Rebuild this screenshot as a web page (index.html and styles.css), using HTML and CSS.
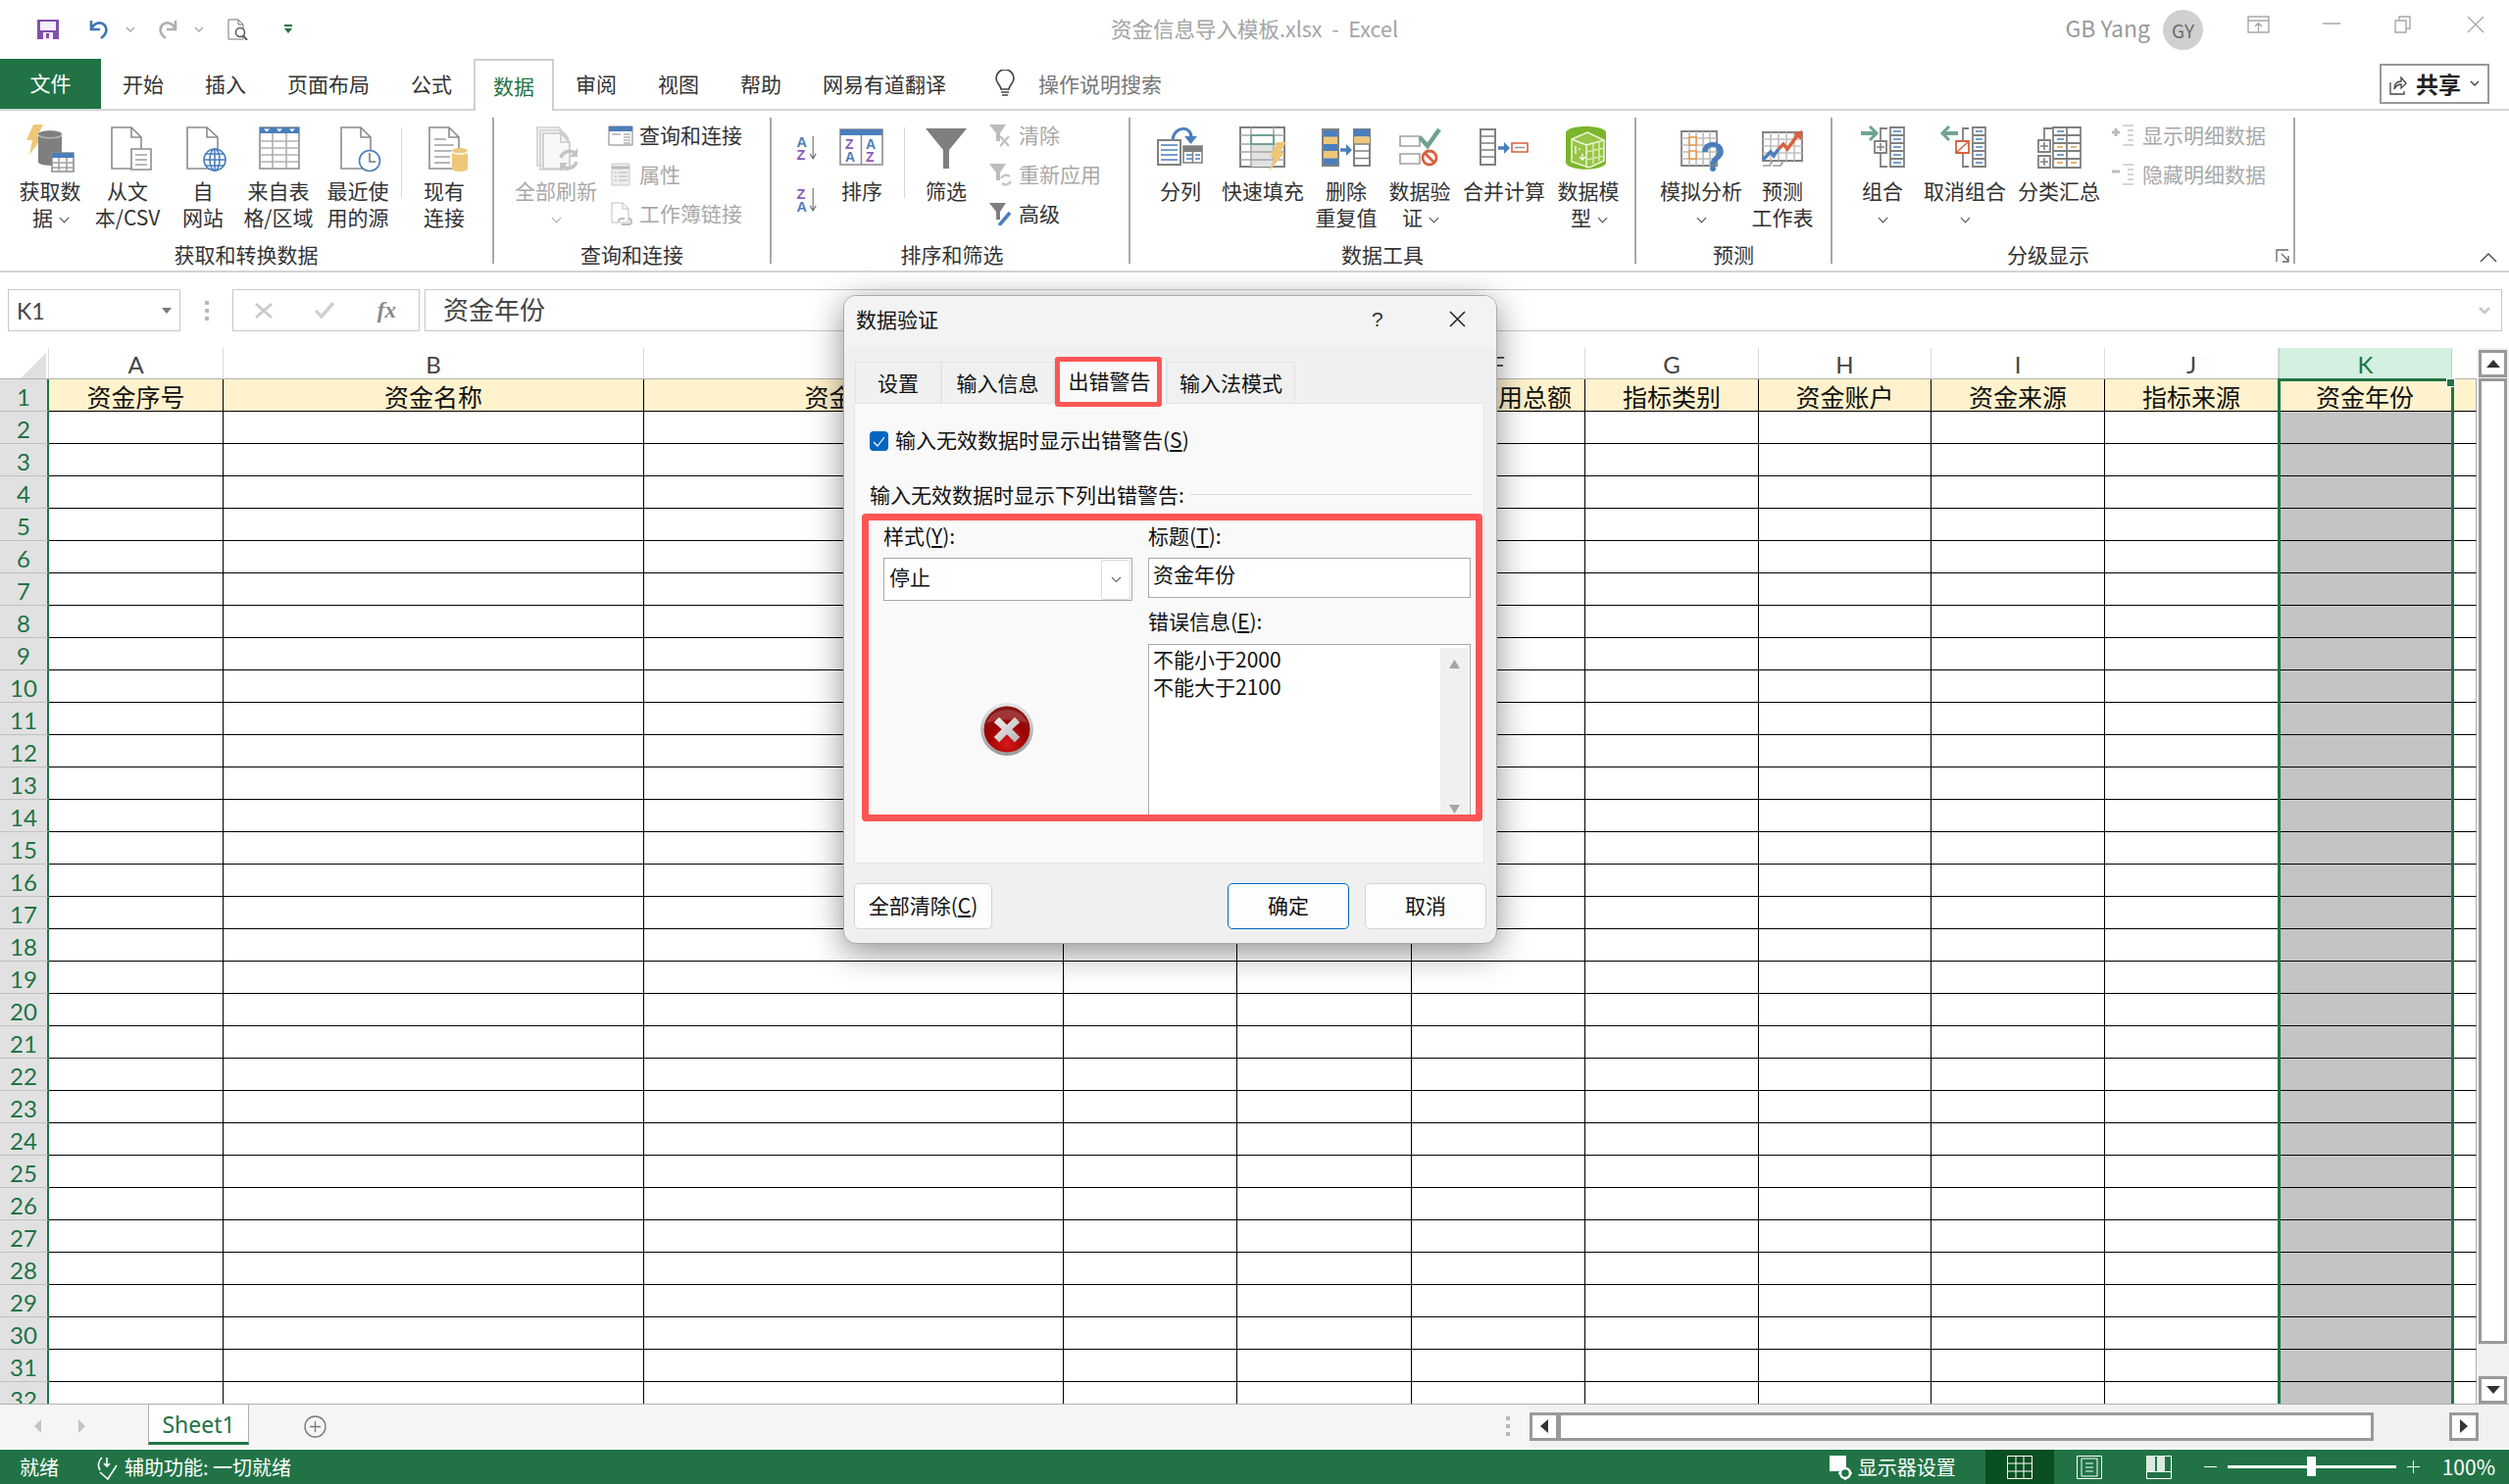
FILE: index.html
```html
<!DOCTYPE html>
<html lang="zh-CN">
<head>
<meta charset="utf-8">
<title>资金信息导入模板.xlsx - Excel</title>
<link rel="stylesheet" href="styles.css">
</head>
<body>
<header class="titlebar">
  <div class="qat">
    <svg class="qat-save" width="22" height="20" viewBox="0 0 22 20"><path d="M0 0h22v20H0z" fill="#8150ad"/><path d="M3 2h16v9H3z" fill="#f6f0fb"/><path d="M6 13h10v7H6z" fill="#f6f0fb"/><path d="M9 14h3v5H9z" fill="#8150ad"/></svg>
    <svg class="qat-undo" width="22" height="22" viewBox="0 0 22 22"><path d="M3 2v9h9M3 11c3-7 9-8 13-5 4 4 3 10-3 14" fill="none" stroke="#3f76b5" stroke-width="2.600"/></svg>
    <svg class="qat-chev" width="10" height="7" viewBox="0 0 10 7"><path d="M1 1l4 4 4-4" fill="none" stroke="#a8a8a8" stroke-width="1.500"/></svg>
    <svg class="qat-redo" width="22" height="22" viewBox="0 0 22 22"><path d="M19 2v9h-9M19 11c-3-7-9-8-13-5-4 4-3 10 3 14" fill="none" stroke="#b0b0b0" stroke-width="2.600"/></svg>
    <svg class="qat-chev" width="10" height="7" viewBox="0 0 10 7"><path d="M1 1l4 4 4-4" fill="none" stroke="#a8a8a8" stroke-width="1.500"/></svg>
    <svg class="qat-print" width="22" height="22" viewBox="0 0 22 22"><path d="M1 1h10l5 5v15H1zM11 1v5h5" fill="#fff" stroke="#777"/><circle cx="13" cy="14" r="4.500" fill="#fff" stroke="#555" stroke-width="1.500"/><path d="M16 17l4 5" stroke="#555" stroke-width="2"/></svg>
    <svg class="qat-more" width="8" height="10" viewBox="0 0 8 10"><path d="M0 0h8v2H0zM0 4h8L4 9z" fill="#217346"/></svg>
  </div>
  <div class="doc-title">资金信息导入模板.xlsx&nbsp; - &nbsp;Excel</div>
  <div class="winctl">
    <span class="user">GB Yang</span>
    <span class="avatar">GY</span>
    <svg class="wc-ribbon" width="23" height="18" viewBox="0 0 23 18"><path d="M1 1h21v16H1zM1 5h21M11.500 16V8M8 11l3.500-3.500L15 11" fill="none" stroke="#a8a8a8" stroke-width="1.400"/></svg>
    <svg class="wc-min" width="18" height="2" viewBox="0 0 18 2"><path d="M0 1h18" stroke="#a8a8a8" stroke-width="1.500"/></svg>
    <svg class="wc-max" width="18" height="18" viewBox="0 0 18 18"><path d="M1 5h11v12H1zM5 5V1h11v12h-4" fill="none" stroke="#a8a8a8" stroke-width="1.400"/></svg>
    <svg class="wc-close" width="18" height="18" viewBox="0 0 18 18"><path d="M1 1l16 16M17 1L1 17" stroke="#a8a8a8" stroke-width="1.400"/></svg>
  </div>
</header>

<nav class="tabs">
  <span class="tab tab-file">文件</span>
  <span class="tab">开始</span>
  <span class="tab">插入</span>
  <span class="tab">页面布局</span>
  <span class="tab">公式</span>
  <span class="tab tab-on">数据</span>
  <span class="tab">审阅</span>
  <span class="tab">视图</span>
  <span class="tab">帮助</span>
  <span class="tab">网易有道翻译</span>
  <span class="tellme">
    <svg width="20" height="29" viewBox="0 0 20 29"><path d="M6 20c0-4-5-6-5-11a9 9 0 0 1 18 0c0 5-5 7-5 11z M6 23h8M7 26h6" fill="none" stroke="#444" stroke-width="1.700"/></svg>
    <span>操作说明搜索</span>
  </span>
  <span class="share">
    <svg width="18" height="22" viewBox="0 0 18 22"><path d="M1 9v12h14v-3M5 16c0-6 3-8 7-8V4l5 6-5 5v-4c-3 0-5 1-7 5z" fill="none" stroke="#444" stroke-width="1.300"/></svg>
    <b>共享</b>
    <svg width="10" height="7" viewBox="0 0 10 7"><path d="M1 1l4 4 4-4" fill="none" stroke="#444" stroke-width="1.500"/></svg>
  </span>
</nav>

<section class="ribbon">
  <div class="group g1">
    <div class="group-body">
      <div class="btn w76">
        <svg class="ico" viewBox="0 0 60 50"><path d="M13 0h10l-6 12h6L9 31l3-15H6z" fill="#f0c674"/><path d="M18 10c0-5 24-5 24 0v28c0 5-24 5-24 0z" fill="#7f7f7f"/><path d="M18 10c0 5 24 5 24 0" fill="none" stroke="#b4b4b4" stroke-width="1.500"/><path d="M32 29h22v19H32z" fill="#fff" stroke="#8c8c8c"/><path d="M32 29h22v5H32z" fill="#4a7ebb"/><path d="M32 39h22M32 44h22M39 34v14M47 34v14" stroke="#a0a0a0"/></svg>
        <span>获取数<br>据<i class="chev"></i></span>
      </div>
      <div class="btn w82">
        <svg class="ico" viewBox="0 0 60 50"><path d="M14 3h20l10 10v32H14zM34 3v10h10" fill="#fff" stroke="#8c8c8c"/><path d="M34 25h20v21H34z" fill="#fff" stroke="#8c8c8c"/><path d="M38 31h12M38 36h12M38 41h12" stroke="#a0a0a0"/></svg>
        <span>从文<br>本/CSV</span>
      </div>
      <div class="btn w72">
        <svg class="ico" viewBox="0 0 60 50"><path d="M14 3h20l11 10v32H14zM34 3v10h11" fill="#fff" stroke="#8c8c8c"/><circle cx="42" cy="36" r="11" fill="#fff" stroke="#4a7ebb"/><ellipse cx="42" cy="36" rx="5" ry="11" fill="none" stroke="#4a7ebb"/><path d="M31 36h22M33 30h18M33 42h18M42 25v22" stroke="#4a7ebb"/></svg>
        <span>自<br>网站</span>
      </div>
      <div class="btn w82">
        <svg class="ico" viewBox="0 0 60 50"><path d="M11 3h40v42H11z" fill="#fff" stroke="#8c8c8c"/><path d="M11 3h40v6H11z" fill="#4a7ebb"/><path d="M15 4.500h6l-3 3zM28 4.500h6l-3 3zM41 4.500h6l-3 3z" fill="#fff"/><path d="M11 17h40M11 24h40M11 31h40M11 38h40M24 9v36M38 9v36" stroke="#b0b0b0"/></svg>
        <span>来自表<br>格/区域</span>
      </div>
      <div class="btn w80">
        <svg class="ico" viewBox="0 0 60 50"><path d="M13 3h20l10 10v32H13zM33 3v10h10" fill="#fff" stroke="#8c8c8c"/><circle cx="42" cy="37" r="10.500" fill="#fff" stroke="#4a7ebb"/><path d="M42 29v9h6" fill="none" stroke="#777"/></svg>
        <span>最近使<br>用的源</span>
      </div>
      <i class="vsep"></i>
      <div class="btn w78">
        <svg class="ico" viewBox="0 0 60 50"><path d="M15 3h20l10 10v32H15zM35 3v10h10" fill="#fff" stroke="#8c8c8c"/><path d="M20 15h12M20 21h20M20 27h20M20 33h16M20 39h16" stroke="#a0a0a0"/><path d="M38 27c0-4 16-4 16 0v18c0 4-16 4-16 0z" fill="#eec77b"/><path d="M38 27c0 4 16 4 16 0" fill="none" stroke="#fff"/></svg>
        <span>现有<br>连接</span>
      </div>
    </div>
    <div class="group-label">获取和转换数据</div>
  </div>

  <div class="group g2">
    <div class="group-body">
      <div class="btn w90 off">
        <svg class="ico" viewBox="0 0 60 50"><path d="M11 3h22l9 10v29H11z" fill="#f4f4f4" stroke="#d0d0d0"/><path d="M14 6h19l9 8v32H14z" fill="#f4f4f4" stroke="#d0d0d0"/><path d="M17 9h18l9 9v27H17zM35 9v9h9" fill="#f8f8f8" stroke="#c8c8c8"/><path d="M35 34a9 9 0 0 1 15-4M51 38a9 9 0 0 1-15 4" fill="none" stroke="#c4c4c4" stroke-width="3.500"/><path d="M52 24v9h-8zM34 48v-9h8z" fill="#c4c4c4"/></svg>
        <span>全部刷新<br><i class="chev chev-solo"></i></span>
      </div>
      <div class="smalls">
        <div class="small on"><svg viewBox="0 0 26 24"><path d="M1 3h24v19H1z" fill="#fff" stroke="#7f7f7f"/><path d="M1 3h24v5H1z" fill="#4a7ebb"/><path d="M16 11h7M16 14h7M16 17h7M16 20h7M4 11h9" stroke="#8c8c8c"/></svg><span>查询和连接</span></div>
        <div class="small"><svg viewBox="0 0 26 24"><path d="M4 1h18v22H4z" fill="#ededed" stroke="#c8c8c8"/><path d="M4 5h18" stroke="#bcbcbc" stroke-width="3"/><path d="M7 10h2M11 10h9M7 14h2M11 14h9M7 18h2M11 18h9" stroke="#b4b4b4"/></svg><span>属性</span></div>
        <div class="small"><svg viewBox="0 0 26 24"><path d="M4 1h11l6 6v14H4zM15 1v6h6" fill="#fff" stroke="#c0c0c0"/><path d="M11 20a3 3 0 0 1 3-3h3M21 17a3 3 0 0 1 0 6h-7" fill="none" stroke="#bcbcbc" stroke-width="2"/></svg><span>工作簿链接</span></div>
      </div>
    </div>
    <div class="group-label">查询和连接</div>
  </div>

  <div class="group g3">
    <div class="group-body">
      <div class="sortpair">
        <div class="sortmini"><svg viewBox="0 0 22 26"><text class="s-a" x="0" y="12">A</text><text class="s-z" x="0" y="24">Z</text><path d="M16 1v21M13 18l3 5 3-5" fill="none" stroke="#666"/></svg></div>
        <div class="sortmini"><svg viewBox="0 0 22 26"><text class="s-z" x="0" y="12">Z</text><text class="s-a" x="0" y="24">A</text><path d="M16 1v21M13 18l3 5 3-5" fill="none" stroke="#666"/></svg></div>
      </div>
      <div class="btn w60">
        <svg class="ico" viewBox="0 0 60 50"><path d="M8 5h43v36H8z" fill="#fff" stroke="#8c8c8c"/><path d="M8 5h43v6H8z" fill="#4a7ebb"/><path d="M29.500 11v30" stroke="#8c8c8c"/><text class="s-z" x="13" y="25">Z</text><text class="s-a" x="34" y="25">A</text><text class="s-a" x="13" y="38">A</text><text class="s-z" x="34" y="38">Z</text></svg>
        <span>排序</span>
      </div>
      <i class="vsep vsep2"></i>
      <div class="btn w60">
        <svg class="ico" viewBox="0 0 60 50"><path d="M9 4h42L33 26v19h-6V26z" fill="#7f7f7f"/></svg>
        <span>筛选</span>
      </div>
      <div class="smalls s3">
        <div class="small"><svg viewBox="0 0 26 24"><path d="M2 1h17l-6 9v8h-4v-8z" fill="#bcbcbc"/><path d="M13 13l9 10M22 13l-9 10" stroke="#c0c0c0" stroke-width="2"/></svg><span>清除</span></div>
        <div class="small"><svg viewBox="0 0 26 24"><path d="M2 1h17l-6 9v8h-4v-8z" fill="#bcbcbc"/><path d="M14 16a6 6 0 0 1 9-2M24 19a6 6 0 0 1-9 2" fill="none" stroke="#c4c4c4" stroke-width="2.500"/></svg><span>重新应用</span></div>
        <div class="small on"><svg viewBox="0 0 26 24"><path d="M2 1h17l-6 9v8h-4v-8z" fill="#7f7f7f"/><path d="M23 11L12 24" stroke="#4a7ebb" stroke-width="3.500"/></svg><span>高级</span></div>
      </div>
    </div>
    <div class="group-label">排序和筛选</div>
  </div>

  <div class="group g4">
    <div class="group-body">
      <div class="btn w76">
        <svg class="ico" viewBox="0 0 60 50"><path d="M7 16h23v25H7z" fill="#fff" stroke="#808080" stroke-width="2"/><path d="M10 21h17M10 26h17M10 31h17M10 36h17" stroke="#4a7ebb" stroke-width="1.500"/><path d="M33 22h19v17H33z" fill="#fff" stroke="#808080"/><path d="M33 22h19v6H33z" fill="#7f7f7f"/><path d="M36 31h6M45 31h5M36 35h6M45 35h5" stroke="#4a7ebb"/><path d="M42.500 28v11" stroke="#808080"/><path d="M22 15c2-14 20-14 19-1" fill="none" stroke="#4a7ebb" stroke-width="3"/><path d="M34 12h13l-6.500 8z" fill="#4a7ebb"/></svg>
        <span>分列</span>
      </div>
      <div class="btn w92">
        <svg class="ico" viewBox="0 0 60 50"><path d="M7 3h45v40H7z" fill="#fff" stroke="#808080" stroke-width="2"/><path d="M18 20h23v23H18z" fill="#e2e2e2"/><path d="M7 11h45M7 20h45M7 28h45M7 36h45M18 3v40M41 3v40" stroke="#a8a8a8"/><path d="M18 11h23v9H18z" fill="#fff" stroke="#6fa38f" stroke-width="2"/><path d="M45 18h9l-7 11h5L36 48l6-15h-5z" fill="#f0c674"/></svg>
        <span>快速填充</span>
      </div>
      <div class="btn w78">
        <svg class="ico" viewBox="0 0 60 50"><path d="M6 5h16v37H6z" fill="#4a7ebb"/><path d="M6 12.500h16v7.500H6zM6 27h16v7.500H6z" fill="#eec77b"/><path d="M6 5h16v37H6z" fill="none" stroke="#808080" stroke-width="2"/><path d="M38 5h16v37H38z" fill="#fff" stroke="#808080" stroke-width="2"/><path d="M38 5h16v7.500H38z" fill="#4a7ebb"/><path d="M38 12.500h16V20H38z" fill="#eec77b"/><path d="M38 20h16M38 27h16M38 34.500h16" stroke="#808080" stroke-width="1.500"/><path d="M24 26h8" stroke="#4a7ebb" stroke-width="3.500"/><path d="M30 20l6 6-6 6z" fill="#4a7ebb"/></svg>
        <span>删除<br>重复值</span>
      </div>
      <div class="btn w72">
        <svg class="ico" viewBox="0 0 60 50"><path d="M10 12h20v10H10zM10 30h20v10H10z" fill="#fff" stroke="#a0a0a0"/><path d="M30 13l8 9L50 5" fill="none" stroke="#6fa38f" stroke-width="4.500"/><circle cx="40" cy="34" r="7" fill="#fff" stroke="#d9603f" stroke-width="2.800"/><path d="M35 29l10 10" stroke="#d9603f" stroke-width="2.800"/></svg>
        <span>数据验<br>证<i class="chev"></i></span>
      </div>
      <div class="btn w100">
        <svg class="ico" viewBox="0 0 60 50"><path d="M6 5h15v36H6z" fill="#fff" stroke="#808080" stroke-width="2"/><path d="M6 12h15M6 19h15M6 26h15M6 33h15" stroke="#808080" stroke-width="1.500"/><path d="M24 24h8" stroke="#4a7ebb" stroke-width="3.500"/><path d="M30 18l6 6-6 6z" fill="#4a7ebb"/><path d="M38 19h16v9H38z" fill="#fff" stroke="#d9603f"/><path d="M41 23.500h10" stroke="#999"/></svg>
        <span>合并计算</span>
      </div>
      <div class="btn w72">
        <svg class="ico" viewBox="0 0 60 50"><path d="M7 8c2-8 39-8 41 0v31c-2 9-39 9-41 0z" fill="#7ab52b"/><path d="M13 15l16-7 17 8v21l-15 7-18-6z" fill="#96c547" stroke="#eef6dc" stroke-width="1.500"/><path d="M13 15l15 6 18-5M28 21v23" fill="none" stroke="#eef6dc" stroke-width="1.500"/><path d="M35 19v21M41 17v20M28 28l18-4M28 36l18-4" stroke="#d6ebae"/><path d="M17 22v8M21 26v-2M24 30v6M21 33l3 3 3-3" fill="none" stroke="#fff" stroke-width="1.300"/></svg>
        <span>数据模<br>型<i class="chev"></i></span>
      </div>
    </div>
    <div class="group-label">数据工具</div>
  </div>

  <div class="group g5">
    <div class="group-body">
      <div class="btn w92">
        <svg class="ico" viewBox="0 0 60 50"><path d="M10 7h36v35H10z" fill="#fff" stroke="#808080" stroke-width="1.800"/><path d="M10 14h36M10 21h36M10 28h36M10 35h36M18 7v35M25 7v35M32 7v35M39 7v35" stroke="#bcbcbc"/><path d="M18 13h7v8h-7zM18 27h7v8h-7z" fill="#fff" stroke="#e89540" stroke-width="1.500"/><path d="M34 28c0-10 16-10 16 0 0 6-8 6-8 13" fill="none" stroke="#4a7ebb" stroke-width="5.500"/><circle cx="42" cy="45" r="3" fill="#4a7ebb"/></svg>
        <span>模拟分析<br><i class="chev chev-solo"></i></span>
      </div>
      <div class="btn w74">
        <svg class="ico" viewBox="0 0 60 50"><path d="M10 8h40v29H10z" fill="#fff" stroke="#808080" stroke-width="1.800"/><path d="M10 15h40M10 22h40M10 29h40M18 8v29M26 8v29M34 8v29M42 8v29" stroke="#c0c0c0"/><path d="M10 36l8-8 3 4 5-7" fill="none" stroke="#4a7ebb" stroke-width="3.500"/><path d="M26 25l5-5 4 5 11-15" fill="none" stroke="#d9603f" stroke-width="3.500"/><path d="M41 9l9-3-1 10z" fill="#d9603f"/><path d="M10 42h7l3-5M20 42h8l3-5" fill="none" stroke="#999"/></svg>
        <span>预测<br>工作表</span>
      </div>
    </div>
    <div class="group-label">预测</div>
  </div>

  <div class="group g6">
    <div class="group-body">
      <div class="btn w78">
        <svg class="ico" viewBox="0 0 60 50"><path d="M8 9h15" stroke="#6fa38f" stroke-width="4"/><path d="M17 2l7 7-7 7" fill="none" stroke="#6fa38f" stroke-width="3"/><path d="M35 4h-7v12M35 43h-7V30" fill="none" stroke="#808080" stroke-width="1.800"/><path d="M22 17h12v12H22z" fill="#fff" stroke="#808080" stroke-width="1.800"/><path d="M24 23h8M28 19v8" stroke="#808080"/><path d="M38 3h14v40H38zM38 11h14M38 19h14M38 27h14M38 35h14" fill="#fff" stroke="#808080" stroke-width="1.800"/><path d="M41 7h8M41 15h8M41 23h8M41 31h8M41 39h8" stroke="#4a7ebb" stroke-width="1.500"/></svg>
        <span>组合<br><i class="chev chev-solo"></i></span>
      </div>
      <div class="btn w90">
        <svg class="ico" viewBox="0 0 60 50"><path d="M9 9h14" stroke="#6fa38f" stroke-width="4"/><path d="M14 2L7 9l7 7" fill="none" stroke="#6fa38f" stroke-width="3"/><path d="M34 4h-6v13M34 43h-6V29" fill="none" stroke="#808080" stroke-width="1.800"/><path d="M21 17h13v12H21z" fill="#fff" stroke="#d9603f" stroke-width="1.800"/><path d="M22 28l11-10" stroke="#d9603f"/><path d="M38 3h13v40H38zM38 11h13M38 19h13M38 27h13M38 35h13" fill="#fff" stroke="#808080" stroke-width="1.800"/><path d="M41 7h7M41 15h7M41 23h7M41 31h7M41 39h7" stroke="#4a7ebb" stroke-width="1.500"/></svg>
        <span>取消组合<br><i class="chev chev-solo"></i></span>
      </div>
      <div class="btn w102">
        <svg class="ico" viewBox="0 0 60 50"><path d="M23 4h-8v12" fill="none" stroke="#808080" stroke-width="1.800"/><path d="M9 16h12v12H9zM9 32h12v12H9z" fill="#fff" stroke="#808080" stroke-width="1.800"/><path d="M11 22h8M15 18v8M11 38h8M15 34v8" stroke="#808080"/><path d="M24 3h28v41H24zM24 11h28M24 19h28M24 27h28M24 35h28M38 3v41" fill="#fff" stroke="#808080" stroke-width="1.800"/><path d="M28 7h7M28 15h7M28 31h7" stroke="#4a7ebb" stroke-width="1.500"/><path d="M28 23h6M42 23h6M28 39h6M42 39h6" stroke="#e89540" stroke-width="1.500"/></svg>
        <span>分类汇总</span>
      </div>
      <div class="smalls s6">
        <div class="small"><svg viewBox="0 0 26 24"><path d="M1 9h8M5 5v8" stroke="#bcbcbc" stroke-width="3"/><path d="M12 2h11M17 7h6M17 12h6M17 17h6M12 22h11" stroke="#c8c8c8" stroke-width="1.500"/></svg><span>显示明细数据</span></div>
        <div class="small"><svg viewBox="0 0 26 24"><path d="M1 9h8" stroke="#bcbcbc" stroke-width="3"/><path d="M12 2h11M17 7h6M17 12h6M17 17h6M12 22h11" stroke="#c8c8c8" stroke-width="1.500"/></svg><span>隐藏明细数据</span></div>
      </div>
      <svg class="launcher" width="14" height="14" viewBox="0 0 14 14"><path d="M13 1H1v12M6 5l7 7M13 7v6H7" fill="none" stroke="#666" stroke-width="1.300"/></svg>
    </div>
    <div class="group-label">分级显示</div>
  </div>
  <svg class="collapse" width="18" height="10" viewBox="0 0 18 10"><path d="M1 9l8-8 8 8" fill="none" stroke="#555" stroke-width="1.500"/></svg>
</section>

<section class="formula">
  <div class="namebox"><span>K1</span><svg width="10" height="6" viewBox="0 0 10 6"><path d="M0 0h10L5 6z" fill="#777"/></svg></div>
  <div class="grip"><i></i><i></i><i></i></div>
  <div class="fx-btns">
    <svg width="18" height="16" viewBox="0 0 18 16"><path d="M1 1l16 14M17 1L1 15" stroke="#c8c8c8" stroke-width="2.500"/></svg>
    <svg width="20" height="17" viewBox="0 0 20 17"><path d="M1 9l6 6L19 1" fill="none" stroke="#d0d0d0" stroke-width="3.500"/></svg>
    <span class="fx">fx</span>
  </div>
  <div class="fx-input"><span>资金年份</span><svg width="12" height="8" viewBox="0 0 12 8"><path d="M1 1l5 5 5-5" fill="none" stroke="#c8c8c8" stroke-width="2.500"/></svg></div>
</section>

<main class="sheet">
  <div class="grid-wrap">
    <table class="grid">
      <colgroup><col class="c-h"><col class="c-a"><col class="c-b"><col class="c-c"><col class="c-d"><col class="c-e"><col class="c-f"><col class="c-g"><col class="c-h2"><col class="c-i"><col class="c-j"><col class="c-k"><col class="c-l"></colgroup>
      <thead>
        <tr><th class="corner"><svg width="26" height="26" viewBox="0 0 26 26"><path d="M26 0v26H0z" fill="#e0e0e0"/></svg></th><th>A</th><th>B</th><th>C</th><th>D</th><th>E</th><th>F</th><th>G</th><th>H</th><th>I</th><th>J</th><th class="col-on">K</th><th class="col-l"></th></tr>
      </thead>
      <tbody>
        <tr class="head"><th>1</th><td>资金序号</td><td>资金名称</td><td>资金类型</td><td>资金规模</td><td>资金用途</td><td>资金使用总额</td><td>指标类别</td><td>资金账户</td><td>资金来源</td><td>指标来源</td><td>资金年份</td><td class="l"></td></tr>
        <tr><th>2</th><td></td><td></td><td></td><td></td><td></td><td></td><td></td><td></td><td></td><td></td><td class="k"></td><td class="l"></td></tr>
        <tr><th>3</th><td></td><td></td><td></td><td></td><td></td><td></td><td></td><td></td><td></td><td></td><td class="k"></td><td class="l"></td></tr>
        <tr><th>4</th><td></td><td></td><td></td><td></td><td></td><td></td><td></td><td></td><td></td><td></td><td class="k"></td><td class="l"></td></tr>
        <tr><th>5</th><td></td><td></td><td></td><td></td><td></td><td></td><td></td><td></td><td></td><td></td><td class="k"></td><td class="l"></td></tr>
        <tr><th>6</th><td></td><td></td><td></td><td></td><td></td><td></td><td></td><td></td><td></td><td></td><td class="k"></td><td class="l"></td></tr>
        <tr><th>7</th><td></td><td></td><td></td><td></td><td></td><td></td><td></td><td></td><td></td><td></td><td class="k"></td><td class="l"></td></tr>
        <tr><th>8</th><td></td><td></td><td></td><td></td><td></td><td></td><td></td><td></td><td></td><td></td><td class="k"></td><td class="l"></td></tr>
        <tr><th>9</th><td></td><td></td><td></td><td></td><td></td><td></td><td></td><td></td><td></td><td></td><td class="k"></td><td class="l"></td></tr>
        <tr><th>10</th><td></td><td></td><td></td><td></td><td></td><td></td><td></td><td></td><td></td><td></td><td class="k"></td><td class="l"></td></tr>
        <tr><th>11</th><td></td><td></td><td></td><td></td><td></td><td></td><td></td><td></td><td></td><td></td><td class="k"></td><td class="l"></td></tr>
        <tr><th>12</th><td></td><td></td><td></td><td></td><td></td><td></td><td></td><td></td><td></td><td></td><td class="k"></td><td class="l"></td></tr>
        <tr><th>13</th><td></td><td></td><td></td><td></td><td></td><td></td><td></td><td></td><td></td><td></td><td class="k"></td><td class="l"></td></tr>
        <tr><th>14</th><td></td><td></td><td></td><td></td><td></td><td></td><td></td><td></td><td></td><td></td><td class="k"></td><td class="l"></td></tr>
        <tr><th>15</th><td></td><td></td><td></td><td></td><td></td><td></td><td></td><td></td><td></td><td></td><td class="k"></td><td class="l"></td></tr>
        <tr><th>16</th><td></td><td></td><td></td><td></td><td></td><td></td><td></td><td></td><td></td><td></td><td class="k"></td><td class="l"></td></tr>
        <tr><th>17</th><td></td><td></td><td></td><td></td><td></td><td></td><td></td><td></td><td></td><td></td><td class="k"></td><td class="l"></td></tr>
        <tr><th>18</th><td></td><td></td><td></td><td></td><td></td><td></td><td></td><td></td><td></td><td></td><td class="k"></td><td class="l"></td></tr>
        <tr><th>19</th><td></td><td></td><td></td><td></td><td></td><td></td><td></td><td></td><td></td><td></td><td class="k"></td><td class="l"></td></tr>
        <tr><th>20</th><td></td><td></td><td></td><td></td><td></td><td></td><td></td><td></td><td></td><td></td><td class="k"></td><td class="l"></td></tr>
        <tr><th>21</th><td></td><td></td><td></td><td></td><td></td><td></td><td></td><td></td><td></td><td></td><td class="k"></td><td class="l"></td></tr>
        <tr><th>22</th><td></td><td></td><td></td><td></td><td></td><td></td><td></td><td></td><td></td><td></td><td class="k"></td><td class="l"></td></tr>
        <tr><th>23</th><td></td><td></td><td></td><td></td><td></td><td></td><td></td><td></td><td></td><td></td><td class="k"></td><td class="l"></td></tr>
        <tr><th>24</th><td></td><td></td><td></td><td></td><td></td><td></td><td></td><td></td><td></td><td></td><td class="k"></td><td class="l"></td></tr>
        <tr><th>25</th><td></td><td></td><td></td><td></td><td></td><td></td><td></td><td></td><td></td><td></td><td class="k"></td><td class="l"></td></tr>
        <tr><th>26</th><td></td><td></td><td></td><td></td><td></td><td></td><td></td><td></td><td></td><td></td><td class="k"></td><td class="l"></td></tr>
        <tr><th>27</th><td></td><td></td><td></td><td></td><td></td><td></td><td></td><td></td><td></td><td></td><td class="k"></td><td class="l"></td></tr>
        <tr><th>28</th><td></td><td></td><td></td><td></td><td></td><td></td><td></td><td></td><td></td><td></td><td class="k"></td><td class="l"></td></tr>
        <tr><th>29</th><td></td><td></td><td></td><td></td><td></td><td></td><td></td><td></td><td></td><td></td><td class="k"></td><td class="l"></td></tr>
        <tr><th>30</th><td></td><td></td><td></td><td></td><td></td><td></td><td></td><td></td><td></td><td></td><td class="k"></td><td class="l"></td></tr>
        <tr><th>31</th><td></td><td></td><td></td><td></td><td></td><td></td><td></td><td></td><td></td><td></td><td class="k"></td><td class="l"></td></tr>
        <tr><th>32</th><td></td><td></td><td></td><td></td><td></td><td></td><td></td><td></td><td></td><td></td><td class="k"></td><td class="l"></td></tr>
      </tbody>
    </table>
    <div class="selection"><i class="handle"></i></div>
  </div>
  <div class="vbar">
    <div class="sb-btn"><svg width="14" height="8" viewBox="0 0 14 8"><path d="M7 0l7 8H0z" fill="#333"/></svg></div>
    <div class="vthumb"></div>
    <div class="sb-btn"><svg width="14" height="8" viewBox="0 0 14 8"><path d="M7 8L0 0h14z" fill="#333"/></svg></div>
  </div>
</main>

<section class="sheetbar">
  <div class="nav">
    <svg width="7" height="14" viewBox="0 0 7 14"><path d="M7 0v14L0 7z" fill="#c4c4c4"/></svg>
    <svg width="7" height="14" viewBox="0 0 7 14"><path d="M0 0v14l7-7z" fill="#c4c4c4"/></svg>
  </div>
  <div class="sheet-tab">Sheet1</div>
  <svg class="add" width="23" height="23" viewBox="0 0 23 23"><circle cx="11.500" cy="11.500" r="10.500" fill="none" stroke="#777" stroke-width="1.300"/><path d="M6 11.500h11M11.500 6v11" stroke="#777" stroke-width="1.300"/></svg>
  <div class="hzone">
    <div class="hgrip"><i></i><i></i><i></i></div>
    <div class="htrack">
      <div class="sb-btn h"><svg width="8" height="14" viewBox="0 0 8 14"><path d="M0 7l8-7v14z" fill="#333"/></svg></div>
      <div class="hthumb"></div>
      <div class="sb-btn h"><svg width="8" height="14" viewBox="0 0 8 14"><path d="M8 7L0 0v14z" fill="#333"/></svg></div>
    </div>
  </div>
</section>

<footer class="status">
  <span class="st-ready">就绪</span>
  <span class="st-acc"><svg width="23" height="26" viewBox="0 0 23 26"><path d="M6 3a10 10 0 0 0-2 13M11 3v9M8 9l3 3 3-3M4 18l8 7 9-14" fill="none" stroke="#fff" stroke-width="1.600"/></svg>辅助功能: 一切就绪</span>
  <span class="st-disp"><svg width="24" height="26" viewBox="0 0 24 26"><path d="M0 1h17v16H0z" fill="#fff"/><circle cx="16" cy="19" r="5" fill="#217346" stroke="#fff" stroke-width="2.500"/><path d="M16 12v3M16 23v3M9 19h3M20 19h3" stroke="#fff" stroke-width="2"/></svg>显示器设置</span>
  <span class="st-view on"><svg width="26" height="24" viewBox="0 0 26 24"><path d="M.5.500h25v23H.500zM.5 8h25M.5 16h25M9 .500v23M17 .500v23" fill="none" stroke="#fff"/></svg></span>
  <span class="st-view"><svg width="26" height="24" viewBox="0 0 26 24"><path d="M.5.500h25v23H.500z" fill="none" stroke="#fff"/><path d="M5 3h16v18H5z" fill="none" stroke="#fff"/><path d="M9 8h8M9 12h8M9 16h8" stroke="#fff"/></svg></span>
  <span class="st-view"><svg width="26" height="24" viewBox="0 0 26 24"><path d="M.5.500h25v23H.500z" fill="none" stroke="#fff"/><path d="M0 0h9v16H0zM11 0h8v16h-8z" fill="#dbe9e0"/><path d="M0 16.500h26" stroke="#fff"/></svg></span>
  <span class="zoom">
    <i class="z-minus"></i>
    <span class="z-track"><i class="z-handle"></i></span>
    <i class="z-plus"></i>
  </span>
  <span class="st-pct">100%</span>
</footer>

<div class="dialog" role="dialog">
  <div class="dlg-title">
    <span>数据验证</span>
    <span class="dlg-q">?</span>
    <svg class="dlg-x" width="17" height="17" viewBox="0 0 17 17"><path d="M1 1l15 15M16 1L1 16" stroke="#222" stroke-width="1.500"/></svg>
  </div>
  <div class="dlg-body">
    <div class="dlg-tabs">
      <span class="dtab t1">设置</span>
      <span class="dtab t2">输入信息</span>
      <span class="dtab t3">出错警告<i class="mark-tab"></i></span>
      <span class="dtab t4">输入法模式</span>
    </div>
    <div class="dlg-panel">
      <label class="chk">
        <span class="box"><svg width="13" height="11" viewBox="0 0 13 11"><path d="M1 6l4 4 7-9" fill="none" stroke="#fff" stroke-width="1.200"/></svg></span>
        <span class="chk-text">输入无效数据时显示出错警告(<u>S</u>)</span>
      </label>
      <div class="sect"><span>输入无效数据时显示下列出错警告:</span><i></i></div>
      <div class="fields">
        <div class="col-left">
          <div class="flabel">样式(<u>Y</u>):</div>
          <div class="select"><span class="sel-text">停止</span><span class="sel-btn"><svg width="11" height="7" viewBox="0 0 11 7"><path d="M1 1l4.500 4.500L10 1" fill="none" stroke="#666" stroke-width="1.100"/></svg></span></div>
          <svg class="err" width="56" height="56" viewBox="0 0 56 56">
            <defs>
              <radialGradient id="ballg" cx="50%" cy="80%" r="70%"><stop offset="0" stop-color="#d81818"/><stop offset=".6" stop-color="#9d0404"/><stop offset="1" stop-color="#8a1414"/></radialGradient>
              <linearGradient id="ringg" x1="0" y1="0" x2="0" y2="1"><stop offset="0" stop-color="#e6e6e6"/><stop offset="1" stop-color="#9a9a9a"/></linearGradient>
              <linearGradient id="crossg" x1="0" y1="0" x2="1" y2="1"><stop offset="0" stop-color="#f2f2f2"/><stop offset="1" stop-color="#b4b4b4"/></linearGradient>
            </defs>
            <circle cx="28" cy="28" r="27" fill="url(#ringg)"/>
            <circle cx="28" cy="28" r="23.500" fill="url(#ballg)"/>
            <path d="M7 22a22 20 0 0 1 42 0c-10-5-32-5-42 0z" fill="#fff" opacity=".16"/>
            <path class="err-x" d="M19 14l9 9 9-9 6 6-9 8 9 9-6 6-9-9-9 9-6-6 9-9-9-8z" fill="url(#crossg)"/>
          </svg>
        </div>
        <div class="col-right">
          <div class="flabel">标题(<u>T</u>):</div>
          <div class="input">资金年份</div>
          <div class="flabel fl2">错误信息(<u>E</u>):</div>
          <div class="textarea">
            <div class="ta-text">不能小于2000<br>不能大于2100</div>
            <div class="ta-scroll">
              <svg width="11" height="9" viewBox="0 0 11 9"><path d="M5.500 0L11 9H0z" fill="#a6a6a6"/></svg>
              <svg width="11" height="9" viewBox="0 0 11 9"><path d="M5.500 9L0 0h11z" fill="#a6a6a6"/></svg>
            </div>
          </div>
        </div>
        <i class="mark-fields"></i>
      </div>
    </div>
    <div class="dlg-btns">
      <span class="dbtn b-clear">全部清除(<u>C</u>)</span>
      <span class="dbtn b-ok">确定</span>
      <span class="dbtn b-cancel">取消</span>
    </div>
  </div>
</div>
</body>
</html>
```

FILE: styles.css
```css
* { box-sizing: border-box; }
html, body { margin: 0; padding: 0; }
body {
  width: 2559px; height: 1514px; overflow: hidden; position: relative;
  display: flex; flex-direction: column; background: #fff;
  font-family: "Noto Sans CJK SC", "Noto Sans", sans-serif;
  font-size: 21px; color: #333; line-height: 27px;
}
i { font-style: normal; }
svg { display: block; flex: none; }

/* title bar */
.titlebar { height: 60px; display: grid; grid-template-columns: 1fr auto 1fr; align-items: center; flex: none; }
.qat { display: flex; align-items: center; padding-left: 38px; }
.qat-undo { margin-left: 30px; }
.qat-redo { margin-left: 22px; }
.qat .qat-chev { margin-left: 16px; }
.qat-print { margin-left: 24px; }
.qat-more { margin-left: 36px; }
.doc-title { color: #a4a4a4; font-size: 21.500px; padding-bottom: 3px; }
.winctl { display: flex; align-items: center; justify-content: flex-end; padding-right: 25px; }
.user { color: #9a9a9a; font-size: 23px; margin-right: 13px; padding-bottom: 3px; }
.avatar { width: 41px; height: 41px; border-radius: 50%; background: #d0d0d0; color: #6a6a6a; font-size: 19px; display: flex; align-items: center; justify-content: center; }
.wc-ribbon { margin-left: 45px; margin-top: -10px; }
.wc-min { margin-left: 54px; margin-top: -12px; }
.wc-max { margin-left: 55px; margin-top: -10px; }
.wc-close { margin-left: 56px; margin-top: -10px; }

/* tabs */
.tabs { height: 53px; flex: none; display: flex; align-items: stretch; border-bottom: 2px solid #d4d4d4; }
.tab { padding: 0 21px; display: flex; align-items: center; white-space: nowrap; color: #333; }
.tab-file { width: 103px; padding: 0 0 2px; margin-bottom: -2px; margin-right: 1px; justify-content: center; background: #217346; color: #fff; height: 51px; }
.tab-on { color: #217346; margin: 0 1px -2px; padding: 0 18px; background: #fff; border: 2px solid #d0d0d0; border-bottom: 0; }
.tellme { display: flex; align-items: center; margin-left: 29px; color: #777; gap: 24px; }
.share { margin-left: auto; margin-right: 20px; align-self: center; width: 112px; height: 41px; border: 2px solid #999; display: flex; align-items: center; padding-left: 8px; gap: 9px; color: #222; font-size: 23px; }
.share b { font-weight: 700; }

/* ribbon */
.ribbon { height: 165px; flex: none; display: flex; padding-top: 7px; border-bottom: 2px solid #d4d4d4; position: relative; }
.group { height: 149px; display: flex; flex-direction: column; border-right: 2px solid #a8a8a8; position: relative; }
.g1 { width: 504px; padding-left: 13px; }
.g2 { width: 283px; padding-left: 18px; }
.g3 { width: 366px; padding-left: 20px; }
.g4 { width: 516px; padding-left: 13px; }
.g5 { width: 200px; padding-left: 20px; }
.g6 { width: 472px; padding-left: 12px; }
.group-body { flex: 1; display: flex; min-height: 0; }
.group-label { height: 26px; line-height: 32px; text-align: center; color: #333; font-size: 21px; white-space: nowrap; }
.g1 .group-label { margin-left: -13px; }
.g2 .group-label { margin-left: -18px; }
.g3 .group-label { margin-left: -16px; }
.g4 .group-label { margin-left: -13px; }
.g5 .group-label { margin-left: -20px; }
.g6 .group-label { margin-left: -12px; margin-right: 30px; }
.btn { flex: none; display: flex; flex-direction: column; align-items: center; text-align: center; white-space: nowrap; }
.btn .ico { width: 60px; height: 50px; margin-top: 7px; margin-bottom: 4px; stroke-width: 1.600px; }
.off { color: #a8a8a8; }
.w60 { width: 60px; }
.w72 { width: 72px; }
.w74 { width: 74px; }
.w76 { width: 76px; }
.w78 { width: 78px; }
.w80 { width: 80px; }
.w82 { width: 82px; }
.w90 { width: 90px; }
.w92 { width: 92px; }
.w100 { width: 100px; }
.w102 { width: 102px; }
.chev { display: inline-block; width: 7px; height: 7px; border-right: 1.500px solid #444; border-bottom: 1.500px solid #444; transform: rotate(45deg); margin-left: 8px; position: relative; top: -4px; }
.chev-solo { margin-left: 0; }
.off .chev { border-color: #a8a8a8; }
.vsep { width: 1px; height: 72px; margin: 10px 4px 0; background: #d8d8d8; }
.vsep2 { margin: 10px 12px 0 13px; }
.smalls { margin-top: -2px; margin-left: 8px; display: flex; flex-direction: column; }
.small { height: 40px; display: flex; align-items: center; gap: 6px; color: #a8a8a8; white-space: nowrap; }
.small span { padding-bottom: 2px; }
.small svg { width: 26px; height: 24px; }
.small.on { color: #333; }
.smalls.s3 { margin-left: 12px; }
.smalls.s6 { margin-left: 2px; }
.sortpair { width: 37px; padding-top: 18px; display: flex; flex-direction: column; gap: 26px; margin-left: 5px; }
.sortmini svg { width: 24px; height: 27px; }
.s-a { font: 700 14px "Liberation Sans", sans-serif; fill: #4a7ebb; }
.s-z { font: 700 14px "Liberation Sans", sans-serif; fill: #8a5cb8; }
.launcher { position: absolute; right: 4px; bottom: 1px; }
.collapse { position: absolute; right: 12px; bottom: 8px; }

/* formula bar */
.formula { height: 77px; flex: none; padding: 17px 7px 17px 8px; display: flex; }
.namebox { width: 176px; border: 1px solid #c8c8c8; display: flex; align-items: center; justify-content: space-between; padding: 0 8px; font: 23px Lato, sans-serif; color: #444; }
.grip { width: 53px; display: flex; flex-direction: column; align-items: center; justify-content: center; gap: 4px; }
.grip i, .hgrip i { width: 4px; height: 4px; background: #b8b8b8; display: block; }
.fx-btns { width: 191px; border: 1px solid #c8c8c8; display: flex; align-items: center; justify-content: space-between; padding: 0 23px 0 22px; }
.fx { font: italic 700 23px "Liberation Serif", serif; color: #888; }
.fx-input { flex: 1; margin-left: 5px; border: 1px solid #c8c8c8; display: flex; align-items: center; justify-content: space-between; padding: 0 11px 0 18px; font-size: 26px; color: #444; }
.fx-input span { padding-bottom: 5px; }

/* sheet */
.sheet { flex: 1; min-height: 0; display: flex; }
.grid-wrap { width: 2526px; height: 1077px; overflow: hidden; position: relative; flex: none; }
.grid { border-collapse: separate; border-spacing: 0; table-layout: fixed; width: 2526px; }
.c-h { width: 50px; } .c-a { width: 178px; } .c-b { width: 429px; } .c-c { width: 428px; }
.c-d { width: 177px; } .c-e { width: 178px; } .c-f { width: 177px; } .c-g { width: 177px; }
.c-h2 { width: 176px; } .c-i { width: 177px; } .c-j { width: 177px; } .c-k { width: 177px; } .c-l { width: 25px; }
.grid thead th { height: 32px; padding: 2px 0 0; font: 400 24px/28px Lato, sans-serif; color: #444; border-right: 1px solid #dcdcdc; border-bottom: 1px solid #b0b0b0; }
.grid thead .corner { padding: 5px 0 0 21px; }
.grid thead .col-on { background: #d3f0e0; color: #217346; border-right-color: #c8c8c8; border-left: 1px solid #c8c8c8; }
.grid thead .col-l { border-right: 0; }
.grid tbody th { height: 33px; padding: 3px 0 0; background: #e1e1e1; color: #217346; font: 400 24px/28px Lato, sans-serif; border-bottom: 1px solid #c0c0c0; border-right: 2px solid #217346; }
.grid td { height: 33px; padding: 0; border-right: 1px solid #000; border-bottom: 1px solid #000; }
.grid .head td { background: #fff2cc; text-align: center; color: #111; font-size: 25px; line-height: 28px; padding-top: 2px; white-space: nowrap; }
.grid .k { background: #c4c4c4; }
.grid td.l { border-right: 1px solid #b0b0b0; }
.selection { position: absolute; left: 2323px; top: 31px; width: 180px; height: 1050px; border: 3px solid #217346; }
.handle { position: absolute; right: -3px; top: -2px; width: 7px; height: 7px; background: #217346; outline: 1px solid #fff; }
.vbar { flex: 1; display: flex; flex-direction: column; padding: 2px 2px 0 2px; background: #f1f1f1; }
.sb-btn { width: 29px; height: 28px; background: #fff; border: 3px solid #999; display: flex; align-items: center; justify-content: center; flex: none; }
.vthumb { height: 985px; margin-top: 1px; background: #fff; border: 3px solid #999; }
.vthumb + .sb-btn { margin-top: auto; }

/* sheet tabs */
.sheetbar { height: 47px; flex: none; display: flex; background: #f5f5f5; border-top: 1px solid #b0b0b0; border-bottom: 2px solid #fff; }
.nav { width: 151px; display: flex; align-items: center; padding-left: 35px; gap: 38px; }
.sheet-tab { width: 103px; margin-top: -1px; background: #fff; border: 1px solid #b0b0b0; border-bottom: 3px solid #217346; color: #217346; text-align: center; font: 23px/40px "Noto Sans", sans-serif; height: 42px; }
.add { margin: 11px 0 0 56px; }
.hzone { margin-left: auto; width: 1044px; display: flex; background: #fff; }
.hgrip { width: 45px; background: #f5f5f5; display: flex; flex-direction: column; align-items: center; justify-content: center; gap: 4px; }
.htrack { flex: 1; display: flex; align-items: center; background: #f1f1f1; }
.sb-btn.h { width: 30px; height: 29px; }
.hthumb { width: 832px; height: 29px; margin-left: -1px; background: #fff; border: 3px solid #999; }
.hthumb + .sb-btn { margin-left: 77px; }

/* status bar */
.status { height: 35px; flex: none; background: #217346; color: #fff; display: flex; align-items: center; font-size: 20px; position: relative; }
.st-ready { margin-left: 20px; }
.st-acc { margin-left: 38px; display: flex; align-items: center; gap: 6px; }
.st-disp { margin-left: auto; display: flex; align-items: center; gap: 5px; margin-right: 30px; }
.st-view { width: 70px; height: 35px; display: flex; align-items: center; justify-content: center; margin-right: 1px; }
.st-view.on { background: #0a4f21; }
.zoom { display: flex; align-items: center; margin-left: 10px; }
.z-minus { width: 13px; height: 1px; background: #fff; margin-right: 11px; }
.z-plus { width: 13px; height: 13px; margin-left: 11px; background: linear-gradient(#fff,#fff) center/13px 1px no-repeat, linear-gradient(#fff,#fff) center/1px 13px no-repeat; }
.z-track { width: 172px; height: 3px; background: #fff; position: relative; }
.z-handle { position: absolute; left: 81px; top: -9px; width: 9px; height: 20px; background: #fff; }
.st-pct { margin-left: 23px; font-size: 21px; margin-right: 14px; }

/* dialog */
.dialog { position: absolute; left: 860px; top: 301px; width: 667px; height: 662px; border: 1px solid #aaa; border-radius: 13px; background: #f0f0f0; box-shadow: 0 8px 34px rgba(0,0,0,.45); color: #111; display: flex; flex-direction: column; overflow: hidden; }
.dlg-title { height: 51px; flex: none; background: #f3f3f3; display: flex; align-items: center; padding: 0 0 5px 12px; font-size: 21px; }
.dlg-q { margin-left: 442px; color: #333; font-family: "Liberation Sans", sans-serif; }
.dlg-x { margin-left: 67px; }
.dlg-body { flex: 1; padding: 16px 12px 0 10px; display: flex; flex-direction: column; }
.dlg-tabs { display: flex; height: 42px; flex: none; margin-left: 1px; }
.dtab { background: #f0f0f0; border: 1px solid #e4e4e4; border-bottom: 0; display: flex; align-items: center; justify-content: center; position: relative; }
.t1 { width: 88px; padding-bottom: 1px; }
.t2 { width: 115px; padding-bottom: 1px; }
.t3 { width: 115px; padding: 0 2px 0 0; background: #f9f9f9; height: 46px; margin-top: -4px; z-index: 2; }
.t4 { width: 131px; padding-bottom: 1px; }
.mark-tab { position: absolute; left: 0; top: -2px; width: 109px; height: 51px; border: 5px solid #ff5555; border-radius: 3px; }
.dlg-panel { height: 470px; flex: none; background: #f9f9f9; border: 1px solid #e4e4e4; padding-top: 27px; }
.chk { display: flex; align-items: center; height: 22px; margin-left: 15px; gap: 7px; }
.chk-text { padding-bottom: 4px; }
.box { width: 19px; height: 20px; background: #0067c0; border-radius: 4px; display: flex; align-items: center; justify-content: center; }
.sect { display: flex; align-items: center; height: 22px; margin: 32px 12px 0 15px; gap: 5px; }
.sect i { flex: 1; height: 1px; background: #dcdcdc; }
.fields { position: relative; margin-top: 9px; height: 314px; display: grid; grid-template-columns: 254px 329px; column-gap: 16px; padding: 11px 0 0 29px; }
.flabel { height: 22px; line-height: 22px; white-space: nowrap; }
.select { margin-top: 12px; height: 44px; background: #fff; border: 1px solid #a8a8a8; display: flex; align-items: center; justify-content: space-between; padding-left: 5px; }
.sel-text { padding-bottom: 5px; }
.sel-btn { width: 30px; height: 41px; border: 1px solid #dcdcdc; border-radius: 2px; display: flex; align-items: center; justify-content: center; margin-right: 1px; }
.err { margin: 103px 0 0 98px; }
.err-x { transform: translate(28px, 28px) scale(.88) translate(-28px, -28px); }
.input { margin-top: 12px; height: 41px; background: #fff; border: 1px solid #a8a8a8; padding: 0 0 0 4px; line-height: 30px; }
.fl2 { margin-top: 12px; }
.textarea { margin-top: 13px; height: 180px; background: #fff; border: 1px solid #a8a8a8; display: flex; justify-content: space-between; }
.ta-text { padding: 0 0 0 4px; line-height: 28px; }
.ta-scroll { width: 29px; height: 174px; margin: 3px 1px 0 0; background: #f0f0f0; display: flex; flex-direction: column; align-items: center; justify-content: space-between; padding: 12px 0 5px; }
.mark-fields { position: absolute; left: 7px; top: 0; width: 633px; height: 314px; border: 7px solid #ff5555; border-radius: 4px; pointer-events: none; }
.dlg-btns { display: flex; margin-top: 20px; gap: 16px; margin-right: -2px; }
.dbtn { height: 47px; display: flex; align-items: center; justify-content: center; padding-bottom: 2px; background: #fdfdfd; border: 1px solid #d4d4d4; border-radius: 5px; color: #111; }
.b-clear { width: 141px; margin-right: auto; }
.b-ok { width: 124px; border-color: #0067c0; }
.b-cancel { width: 124px; }
```
